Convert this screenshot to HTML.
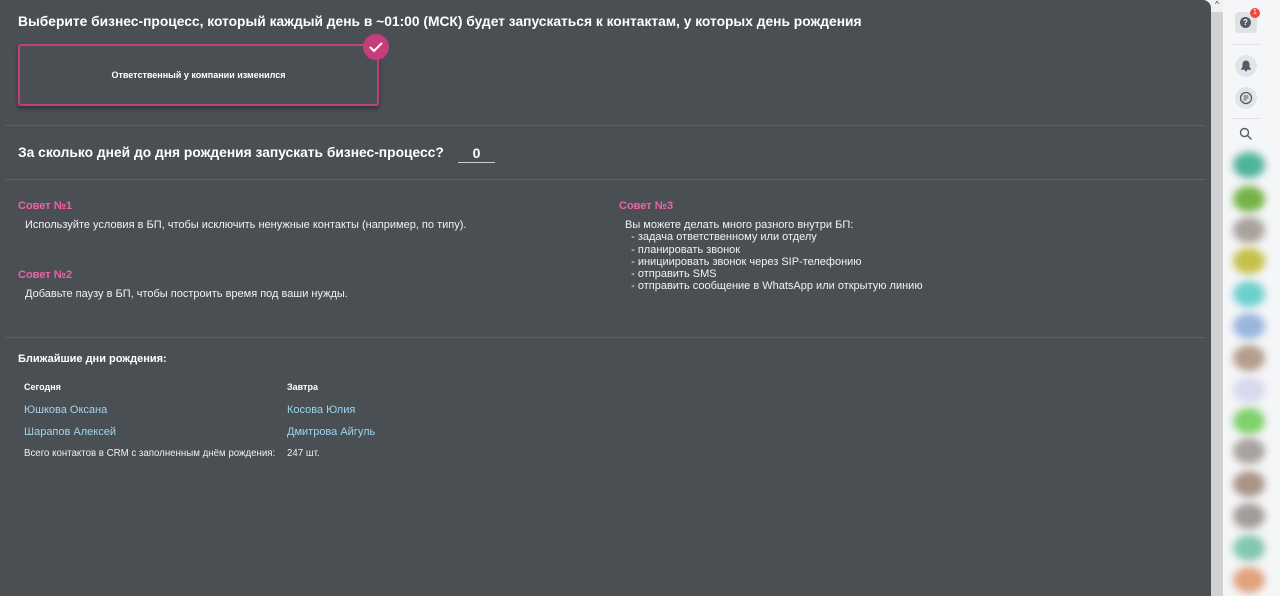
<!DOCTYPE html>
<html><head><meta charset="utf-8"><style>
*{margin:0;padding:0;box-sizing:border-box}
body{width:1280px;height:596px;overflow:hidden;background:#f5f6f8;font-family:"Liberation Sans",Arial,sans-serif;position:relative}
#p{position:absolute;left:0;top:0;width:1211px;height:596px;background:#4a4f53;border-radius:0 8px 0 0;color:#fff}
#sb{position:absolute;left:1211px;top:0;width:12px;height:596px;background:#d2d2d2}
#sb .up{position:absolute;top:0;left:0;width:12px;height:12px;background:#f0f0f0;font-size:8px;text-align:center;color:#333}
#rs{position:absolute;left:1223px;top:0;width:57px;height:596px;background:#f5f6f8}
.t{position:absolute;white-space:nowrap}
.hr{position:absolute;left:5px;width:1200px;height:1px;background:#5c6164}
.card{position:absolute;left:18px;top:44px;width:361px;height:62px;border:2px solid #c2407a;border-radius:3px;box-shadow:0 3px 4px rgba(0,0,0,.35);font-size:9px;font-weight:bold;text-align:center;line-height:58px}
.chk{position:absolute;left:363px;top:34px;width:26px;height:26px;border-radius:50%;background:#c63d7e}
.pk{color:#f062a8;font-size:11px;font-weight:bold}
.s{font-size:11px;color:#f2f2f2}
.lk{font-size:11px;color:#9fd4ee}
.av{position:absolute;left:1233px;width:32px;height:26px;border-radius:50%;filter:blur(4px)}
.ic{position:absolute;left:1235px;width:22px;height:22px;border-radius:50%;background:#e2e4e8}
</style></head><body>
<div id="p">
<div class="t" style="left:18px;top:14px;font-size:13.8px;font-weight:bold">Выберите бизнес-процесс, который каждый день в ~01:00 (МСК) будет запускаться к контактам, у которых день рождения</div>
<div class="card">Ответственный у компании изменился</div>
<div class="chk"><svg width="26" height="26"><path d="M7 13l4 4 8-8" stroke="#fff" stroke-width="2" fill="none"/></svg></div>
<div class="hr" style="top:125px"></div>
<div class="t" style="left:18px;top:145px;font-size:13.8px;font-weight:bold">За сколько дней до дня рождения запускать бизнес-процесс?</div>
<div class="t" style="left:458px;top:145px;width:37px;text-align:center;font-size:14px;font-weight:bold;border-bottom:1px solid #ccc;padding-bottom:1px">0</div>
<div class="hr" style="top:179px"></div>
<div class="t pk" style="left:18px;top:200px">Совет №1</div>
<div class="t s" style="left:25px;top:219px">Используйте условия в БП, чтобы исключить ненужные контакты (например, по типу).</div>
<div class="t pk" style="left:18px;top:269px">Совет №2</div>
<div class="t s" style="left:25px;top:288px">Добавьте паузу в БП, чтобы построить время под ваши нужды.</div>
<div class="t pk" style="left:619px;top:200px">Совет №3</div>
<div class="t s" style="left:625px;top:219px;line-height:12.3px;white-space:pre">Вы можете делать много разного внутри БП:
  - задача ответственному или отделу
  - планировать звонок
  - инициировать звонок через SIP-телефонию
  - отправить SMS
  - отправить сообщение в WhatsApp или открытую линию</div>
<div class="hr" style="top:337px"></div>
<div class="t" style="left:18px;top:353px;font-size:11px;font-weight:bold">Ближайшие дни рождения:</div>
<div class="t" style="left:24px;top:382px;font-size:9px;font-weight:bold">Сегодня</div>
<div class="t" style="left:287px;top:382px;font-size:9px;font-weight:bold">Завтра</div>
<div class="t lk" style="left:24px;top:404px">Юшкова Оксана</div>
<div class="t lk" style="left:287px;top:404px">Косова Юлия</div>
<div class="t lk" style="left:24px;top:426px">Шарапов Алексей</div>
<div class="t lk" style="left:287px;top:426px">Дмитрова Айгуль</div>
<div class="t" style="left:24px;top:448px;font-size:9.7px;color:#eee">Всего контактов в CRM с заполненным днём рождения:</div>
<div class="t" style="left:287px;top:448px;font-size:9.7px;color:#eee">247 шт.</div>
</div>
<div id="sb"><div class="up">^</div></div>
<div id="rs"></div>
<div style="position:absolute;left:1235px;top:12px;width:22px;height:21px;border-radius:4px;background:#dfe1e5"></div>
<div style="position:absolute;left:1240px;top:17px;width:11px;height:11px;border-radius:50%;background:#525c69;color:#fff;font-size:8px;font-weight:bold;text-align:center;line-height:11px">?</div>
<div style="position:absolute;left:1250px;top:8px;width:10px;height:10px;border-radius:50%;background:#f0483e;color:#fff;font-size:7px;text-align:center;line-height:10px">1</div>
<div style="position:absolute;left:1232px;top:44px;width:28px;height:1px;background:#e0e2e5"></div>
<div class="ic" style="top:55px"><svg width="22" height="22"><path d="M7 14h8l-1.2-2v-3a2.8 2.8 0 0 0-5.6 0v3z M10 15.5h2" stroke="#525c69" stroke-width="1.4" fill="#525c69"/></svg></div>
<div class="ic" style="top:87px"><svg width="22" height="22"><circle cx="11" cy="11" r="5.5" stroke="#525c69" stroke-width="1.3" fill="none"/><path d="M8.5 9h5M8.5 11h5M8.5 13h3" stroke="#525c69" stroke-width="1"/></svg></div>
<div style="position:absolute;left:1232px;top:118px;width:28px;height:1px;background:#e0e2e5"></div>
<svg style="position:absolute;left:1238px;top:126px" width="16" height="16"><circle cx="6.5" cy="6.5" r="4" stroke="#525c69" stroke-width="1.4" fill="none"/><path d="M9.5 9.5l4 4" stroke="#525c69" stroke-width="1.5"/></svg>
<div class="av" style="top:152px;background:#4fb39a"></div>
<div class="av" style="top:186px;background:#74b447"></div>
<div class="av" style="top:217px;background:#a9a29c"></div>
<div class="av" style="top:248px;background:#c6c04a"></div>
<div class="av" style="top:281px;background:#6cd0ce"></div>
<div class="av" style="top:313px;background:#9bb5dd"></div>
<div class="av" style="top:345px;background:#b59d8c"></div>
<div class="av" style="top:377px;background:#d8d8ee"></div>
<div class="av" style="top:408px;background:#7fd16b"></div>
<div class="av" style="top:438px;background:#a7a39f"></div>
<div class="av" style="top:471px;background:#a99486"></div>
<div class="av" style="top:503px;background:#a39d99"></div>
<div class="av" style="top:535px;background:#83c7ae"></div>
<div class="av" style="top:567px;background:#e1a27d"></div>
</body></html>
